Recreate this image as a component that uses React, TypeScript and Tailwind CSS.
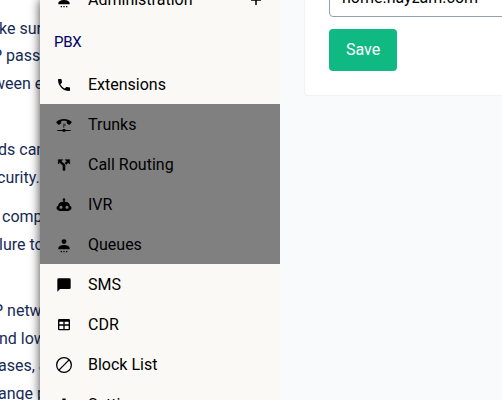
import type { ReactNode } from "react";
import { MdPhone, MdSettings } from "react-icons/md";

function Glyph({ children }: { children: ReactNode }) {
  return (
    <svg viewBox="0 0 24 24" fill="currentColor" className="size-4">
      {children}
    </svg>
  );
}

const trunk = (
  <Glyph>
    <path d="M12 3C7.500 3 3.600 4.500.800 7.100c-.5.5-.5 1.200 0 1.700l2.300 2.600c.4.500 1.100.500 1.600.100l2.600-1.900c.4-.3.600-.7.600-1.200V6.300c2.600-.8 5.600-.8 8.200 0v2.100c0 .5.200.9.600 1.200l2.600 1.900c.5.400 1.200.400 1.600-.1l2.300-2.600c.5-.5.5-1.200 0-1.700C20.400 4.500 16.500 3 12 3Z" />
    <path d="M10.500 10h4v3.500h-2V16h-2z" opacity=".55" />
    <path d="M2 19.500h7.500l1-1.500h3l1 1.500H22V21h-7.500l-1 1h-3l-1-1H2z" />
  </Glyph>
);

const split = (
  <Glyph>
    <path
      d="m14 4 2.290 2.290-2.880 2.880 1.920 1.920 2.880-2.880L20.500 10.500V4zM10 4H3.500v6.500l2.290-2.290L10.500 12.900V20h3v-8.300L7.710 6.290z"
      stroke="currentColor"
      strokeWidth="0.9"
    />
  </Glyph>
);

const robot = (
  <Glyph>
    <path d="M12 2a2 2 0 0 1 2 2c0 .74-.4 1.390-1 1.730V7h1a7 7 0 0 1 7 7h1a1 1 0 0 1 1 1v3a1 1 0 0 1-1 1h-1a3 3 0 0 1-3 2H6a3 3 0 0 1-3-2H2a1 1 0 0 1-1-1v-3a1 1 0 0 1 1-1h1a7 7 0 0 1 7-7h1V5.730C10.400 5.390 10 4.740 10 4a2 2 0 0 1 2-2M7.500 13A2.300 2.300 0 0 0 7.500 17.600 2.300 2.300 0 0 0 7.500 13m9 0a2.300 2.300 0 0 0 0 4.600 2.300 2.300 0 0 0 0-4.600Z" />
  </Glyph>
);

const person = (
  <Glyph>
    <path d="M12 3.200a3.700 3.700 0 1 1 0 7.400 3.700 3.700 0 0 1 0-7.400m0 8.800c5.500 0 8.500 2.300 8.500 4.500v1.800h-17v-1.800C3.500 14.300 6.500 12 12 12M7 21h2v2H7zm4 0h2v2h-2zm4 0h2v2h-2z" />
  </Glyph>
);

const message = (
  <Glyph>
    <path d="M20 2H4a2 2 0 0 0-2 2v18l4-4h14a2 2 0 0 0 2-2V4a2 2 0 0 0-2-2Z" />
  </Glyph>
);

const table = (
  <Glyph>
    <path d="M5 3h14a2 2 0 0 1 2 2v13a2 2 0 0 1-2 2H5a2 2 0 0 1-2-2V5a2 2 0 0 1 2-2m0 4v4h6V7zm8 0v4h6V7zm-8 6v5h6v-5zm8 0v5h6v-5z" />
  </Glyph>
);

const block = (
  <svg viewBox="0 0 16 16" fill="none" stroke="currentColor" strokeWidth="1.300" className="size-4">
    <circle cx="8" cy="8" r="7.350" />
    <path d="M2.900 13.100 13.100 2.900" />
  </svg>
);

function Item({ icon, label, active }: { icon: ReactNode; label: string; active?: boolean }) {
  return (
    <li className={`flex h-10 shrink-0 items-center pt-px pl-[15px] ${active ? "bg-[#808080]" : ""}`}>
      <span className="flex w-[18px] justify-center">{icon}</span>
      <span className="ml-[15px]">{label}</span>
    </li>
  );
}

const article = [
  { text: "ke sure", style: "mt-[15px] -ml-px" },
  { text: "P passw", style: "-mt-px -ml-2" },
  { text: "ween e", style: "-ml-[7px]" },
  { text: "ds can", style: "mt-[38px] -ml-[2px]" },
  { text: "curity.", style: "-ml-[3px]" },
  { text: "compl", style: "mt-[11px] ml-[2px]" },
  { text: "lure to", style: "-ml-px" },
  { text: "P netw", style: "mt-[38px] -ml-[7px]" },
  { text: "nd low", style: "-ml-px" },
  { text: "ases, a", style: "-mt-px -ml-[2px]" },
  { text: "ange p", style: "-ml-[2px]" },
];

export default function App() {
  return (
    <div className="flex h-[400px] w-[502px] overflow-hidden bg-[#f9fafc] font-[Roboto,sans-serif] text-base text-black">
      <section className="w-10 shrink-0 overflow-hidden bg-white text-[#172b55]">
        {article.map(({ text, style }) => (
          <p key={text} className={`h-7 leading-7 whitespace-nowrap ${style}`}>{text}</p>
        ))}
      </section>
      <nav className="relative w-60 shrink-0 bg-[#faf9f5] shadow-[0_0_10px_rgba(0,0,0,0.75)] [clip-path:inset(0_0_0_-20px)]">
        <ul className="-mt-5 flex flex-col">
          <li className="flex h-10 items-center pl-[15px]">
            <span className="flex w-[18px] justify-center">{person}</span>
            <span className="ml-[15px]">Administration</span>
            <svg viewBox="0 0 12 12" className="mr-[18px] ml-auto size-3" stroke="currentColor" strokeWidth="1.500">
              <path d="M6 1v10M1 6h10" />
            </svg>
          </li>
          <li className="flex h-11 items-center pl-[14px] text-[15px] tracking-[-0.3px] text-[#000066]">PBX</li>
          <Item icon={<MdPhone className="size-4" />} label="Extensions" />
          <Item icon={trunk} label="Trunks" active />
          <Item icon={split} label="Call Routing" active />
          <Item icon={robot} label="IVR" active />
          <Item icon={person} label="Queues" active />
          <Item icon={message} label="SMS" />
          <Item icon={table} label="CDR" />
          <Item icon={block} label="Block List" />
          <Item icon={<MdSettings className="size-4" />} label="Settings" />
        </ul>
      </nav>
      <main className="flex-1 overflow-hidden pl-6">
        <form className="flow-root h-24 w-[260px] rounded-b border border-t-0 border-[#f1f2f4] bg-white pl-6">
          <div className="-mt-6 flex h-[41px] items-end rounded border border-[#94a0b4] pb-[6px] pl-3 leading-6">home.nayzam.com</div>
          <button type="button" className="mt-3 h-[42px] w-[68px] rounded bg-[#10b981] text-white">Save</button>
        </form>
      </main>
    </div>
  );
}
